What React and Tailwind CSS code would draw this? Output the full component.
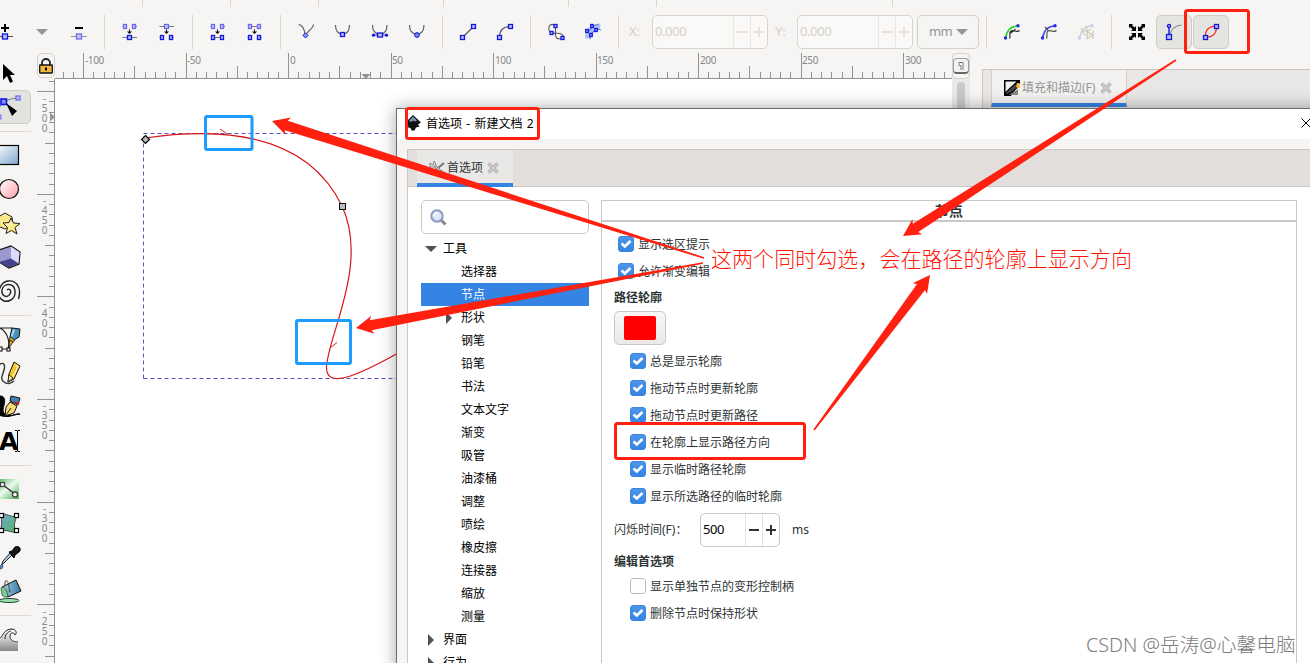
import React from "react";

const FONT = "font-['Noto_Sans','Noto_Sans_CJK_SC',sans-serif]";

/* ---------- toolbar icons (16x16 grid) ---------- */
const Node = ({ x, y, w = 3, h = 4, faded }) => (
  <rect x={x - w / 2} y={y - h / 2} width={w} height={h} fill={faded ? "#c9c9f5" : "#b4c4f0"} stroke={faded ? "#6a6aef" : "#1414e6"} strokeWidth="1.3" />
);
const L = ({ d, c = "#555", w = 1.1 }) => <path d={d} fill="none" stroke={c} strokeWidth={w} />;
const Down = () => <path d="M7 5.5h1v2h2l-2.500 2.600-2.500-2.600h2z" fill="#000" />;

const ICONS = {
  add: <><path d="M3 4h8M7 0v8" stroke="#000" strokeWidth="2" /><L d="M0 12.5h15" /><Node x={7} y={12.5} w={5} h={5} /></>,
  del: <><path d="M4 4h8" stroke="#000" strokeWidth="2" /><L d="M0 12.5h16" c="#999" /><Node x={8} y={12.5} w={5} h={5} faded /></>,
  join: <><L d="M.5 2.5h4M11 2.5h4M.5 13.5h14.500" c="#777" /><Node x={3} y={2.5} faded /><Node x={12} y={2.5} faded /><Down /><Node x={7.500} y={13.5} w={4} /></>,
  brk: <><L d="M.5 2.5h14.500M.5 13.5h4M11 13.5h4" c="#777" /><Node x={7.500} y={2.5} w={4} faded /><Down /><Node x={3} y={13.5} /><Node x={12} y={13.5} /></>,
  joinSeg: <><L d="M.5 2.5h4M11 2.5h4M1 13.5h13" c="#777" /><Node x={3} y={2.5} faded /><Node x={12} y={2.5} faded /><Down /><Node x={3} y={13.5} /><Node x={12} y={13.5} /></>,
  delSeg: <><L d="M1 2.5h13M.5 13.5h4M11 13.5h4" c="#777" /><Node x={3} y={2.5} faded /><Node x={12} y={2.5} faded /><Down /><Node x={3} y={13.5} /><Node x={12} y={13.5} /></>,
  cusp: <><L d="M.5.5C5 .5 6.500 6 7.500 11.500C8.500 8 15 5 15.500.5" /><path d="M7.500 8.800l2.600 2.600-2.600 2.600-2.600-2.600z" fill="#88a0e8" stroke="#1414e6" /></>,
  smooth: <><L d="M.500 1c0 6 3 9 7 9s7-3 7-9" /><Node x={7.500} y={10.500} w={4} /></>,
  sym: <><L d="M.500 1c0 6 3 9 7.500 9s7-3 7-9M2 11h12" /><circle cx="1.500" cy="11.200" r="1.600" fill="#1414e6" /><circle cx="14.500" cy="11.200" r="1.600" fill="#1414e6" /><Node x={8} y={11} w={5} /></>,
  auto: <><L d="M.500 1c0 6 3 9 7.500 9s7-3 7-9" /><circle cx="8" cy="11" r="2.400" fill="#7088e8" stroke="#1414e6" /></>,
  line: <><L d="M2.500 13.500L13.500 2.500" /><Node x={2.500} y={13.500} w={4} /><Node x={13.500} y={2.500} w={4} /></>,
  curve: <><L d="M2.500 13.500C2.500 6 6 2.500 13.500 2.500" /><Node x={2.500} y={13.500} w={4} /><Node x={13.500} y={2.500} w={4} /></>,
  obj: <><L d="M7 1C3-.5.5 1 .8 5c.4 4 4 4.500 7 4.300s7-.300 7.700 3.700M7.500 2v9c0 3 2 4.500 6 3.500" /><Node x={7.500} y={2} w={3} h={3} /><Node x={3.500} y={9} w={3} h={3} /><Node x={14.500} y={14} w={3} h={3} /></>,
  stroke: <><path d="M0 14C0 5 6-.5 15.500.5L15 6C10 6 7 8 5.500 15z" fill="#a9c2ee" /><L d="M0 7h4l4-5 6-2M5 15l1-5 5-5 5 1" c="#5a74e0" /><Node x={2} y={7} w={2.500} h={3} /><Node x={7} y={2} w={2.500} h={3} /><Node x={6} y={11} w={2.500} h={3} /><Node x={11} y={6} w={2.500} h={3} /></>,
  clip: <><path d="M1.500 14C3 6 8 2 14 2" fill="none" stroke="#22d322" strokeWidth="1.700" /><L d="M5.500 14.500C7 11 4.500 8.500 7 7s6 2 8.500-.5M6.500 9c2-2 4-2 5-4" c="#222" /><circle cx="1.500" cy="14" r="1.700" fill="#2828f0" /><circle cx="14" cy="1.800" r="1.700" fill="#2828f0" /></>,
  mask: <><path d="M1.500 14C3 6 8 2 14 2" fill="none" stroke="#4a4af0" strokeWidth="1.700" /><L d="M5.500 14.500C7 11 4.500 8.500 7 7s6 2 8.500-.5M4 3l3 3" c="#444" /><circle cx="1.500" cy="14" r="1.700" fill="#2828f0" /><circle cx="14" cy="1.800" r="1.700" fill="#2828f0" /></>,
  lpe: <g opacity=".35"><path d="M1.500 14C3 6 8 2 14 2M3 4l4 8M7 2l3 5M5 7l8-1" fill="none" stroke="#7f9a7f" strokeWidth="1.400" /><path d="M9 7v8l5.500-4zM15 7v8" fill="#f0e080" stroke="#555" /><circle cx="1.500" cy="14" r="1.700" fill="#8080f0" /><circle cx="14" cy="1.800" r="1.700" fill="#8080f0" /></g>,
  nodes: <g fill="#000" stroke="#000"><path d="M1 1l5 5M15 1l-5 5M1 15l5-5M15 15l-5-5" strokeWidth="2.600" /><path d="M7 2v5H2zM9 2v5h5zM7 14V9H2zM9 14V9h5z" stroke="none" /><path d="M0 0h4L0 4zM16 0h-4l4 4zM0 16h4l-4-4zM16 16h-4l4-4z" stroke="none" /></g>,
  handles: <><L d="M3 3v10" c="#1414e6" w={1.400} /><L d="M3.500 12C5 5 9 1.500 15.500 1" c="#888" /><circle cx="3" cy="2" r="1.600" fill="#aab" stroke="#1414e6" strokeWidth="1.300" /><Node x={3} y={13} w={5} h={5} /></>,
  outline: <><path d="M2.500 13C2 6 6 2 13 2.500C14.500 9 9 14 2.500 13z" fill="none" stroke="#ff1515" strokeWidth="1.200" /><Node x={2.500} y={13.500} w={4} h={4} /><Node x={13.500} y={2.500} w={4} h={4} /></>,
};

const Ico = ({ n, on }) => (
  <div className={on ? "ml-px w-[36px] h-[34px] shrink-0 flex items-center justify-center rounded-[5px] border border-[#cfcbc6] bg-[#e4e4e0]" : "w-[37px] h-[34px] shrink-0 flex items-center justify-center pl-px"}>
    <svg width="16" height="16" viewBox="0 0 16 16" className="overflow-visible">{ICONS[n]}</svg>
  </div>
);
const Sep = () => <div className="w-[14px] h-[34px] shrink-0 flex justify-center"><div className="w-px h-full bg-[#d9d6d2]" /></div>;

const Entry = () => (
  <div className="w-[116px] h-[34px] shrink-0 flex rounded-[5px] border border-[#d8d4cf] bg-[#faf9f8] text-[#d3cfca] text-[13px] overflow-hidden">
    <div className="flex-1 flex items-center pl-[2px] tracking-[-0.4px]">0.000</div>
    <div className="w-[17px] border-l border-[#e8e6e3] flex items-center justify-center"><div className="w-[11px] h-[2px] bg-[#e6e3df]" /></div>
    <div className="w-[17px] border-l border-[#e8e6e3] flex items-center justify-center">
      <svg width="10" height="10"><path d="M0 5h10M5 0v10" stroke="#e6e3df" strokeWidth="2" /></svg>
    </div>
  </div>
);

const TopStrip = () => (
  <div className="h-[7px] flex shrink-0">
    {[143, 88, 88, 125, 125, 88, 236].map((w, i) => (
      <div key={i} className="shrink-0 border-r border-[#d9d6d2] h-full" style={{ width: w }} />
    ))}
  </div>
);

const Toolbar = () => (
  <div className="mt-[8px] h-[34px] flex items-center shrink-0">
    <div className="w-[24px] shrink-0 flex justify-end"><Ico n="add" /></div>
    <div className="w-[36px] shrink-0 flex justify-center"><div className="border-x-[6px] border-x-transparent border-t-[6px] border-t-[#929595]" /></div>
    <Ico n="del" /><Sep />
    <Ico n="join" /><Ico n="brk" /><Sep />
    <Ico n="joinSeg" /><Ico n="delSeg" /><Sep />
    <Ico n="cusp" /><Ico n="smooth" /><Ico n="sym" /><Ico n="auto" /><Sep />
    <Ico n="line" /><Ico n="curve" /><Sep />
    <Ico n="obj" /><Ico n="stroke" /><Sep />
    <div className="w-[27px] shrink-0 pl-[4px] text-[13px] text-[#d3cfca]">X:</div>
    <Entry />
    <div className="w-[29px] shrink-0 pl-[7px] text-[13px] text-[#d3cfca]">Y:</div>
    <Entry />
    <div className="ml-1 w-[62px] h-[34px] shrink-0 flex items-center rounded-[5px] border border-[#d3cfca] text-[13px] text-[#929595] pl-[11px] gap-[4px]">
      <span className="tracking-[-0.6px]">mm</span><div className="border-x-[6px] border-x-transparent border-t-[6px] border-t-[#929595]" />
    </div>
    <Sep />
    <Ico n="clip" /><Ico n="mask" /><Ico n="lpe" /><Sep />
    <Ico n="nodes" /><Ico n="handles" on /><Ico n="outline" on />
  </div>
);

/* ---------- toolbox (24x24 grid) ---------- */
const TOOLS = {
  select: <path d="M6 3v16l4-4 3 7 3-1.500-3-6.500h5z" fill="#000" />,
  node: <><path d="M0 20C1 10 8 4 20 3" fill="none" stroke="#777" /><rect x="4" y="4" width="5.500" height="5.500" fill="#7c90f0" stroke="#1414e6" strokeWidth="1.600" /><rect x="19" y="1" width="4" height="4" fill="#c0c0f5" stroke="#6a6aef" strokeWidth="1.300" /><rect x="0" y="20" width="4" height="4" fill="#c0c0f5" stroke="#6a6aef" /><path d="M9 8l11 8-5 5z" fill="#000" /></>,
  rect: <rect x="-2" y="2.500" width="23.500" height="19" fill="url(#gRect)" stroke="#000" strokeWidth="1.200" />,
  circle: <circle cx="12" cy="12" r="9.500" fill="url(#gCirc)" stroke="#111" strokeWidth="1.200" />,
  star: <><path d="M1 6l7-4 7 4 1 8-8 4-7-3z" fill="#fae98c" stroke="#222" /><path d="M14 7l2.500 5 6.500.5-5 4 2 6.500-5.500-3.500-5.500 3 1.500-6L6 12l6-.5z" fill="url(#gStar)" stroke="#222" /></>,
  box: <><path d="M2 5l12-4 9 6-1 12-10 4-10-6z" fill="#9a9ad0" stroke="#111" strokeWidth="1.200" /><path d="M14 1.500l8.500 6-1 11-7.500-5z" fill="#dcdcfa" /><path d="M2.500 17l11.500-3.500 7.500 5-9.500 4z" fill="#44448f" /></>,
  spiral: <path d="M21.500 20C25 8 19 1 11 2S-1 15 4 20s15 1 14-8-12-8-13-1 6 8 8 4-1-6-3-4" fill="none" stroke="#222" strokeWidth="1.400" />,
  pen: <><path d="M0 1h15M3 1c8 4 10 14 8 21H0" fill="none" stroke="#222" strokeWidth="1.200" /><path d="M15 1l8 1-1 8-5 3-4-3z" fill="#4a91be" stroke="#111" /><path d="M16 2.500l2 .300-2.500 7-1.500-.5z" fill="#b8dcf0" /><path d="M13 10l4.500 3-1 2-4-2z" fill="#f0c040" stroke="#111" strokeWidth=".8" /><path d="M12.500 13l3.500 2-4 6z" fill="#eca822" stroke="#111" strokeWidth=".8" /><rect x="1" y="20" width="4" height="4" fill="#fff" stroke="#000" /><rect x="10" y="21" width="3" height="3" fill="#fff" stroke="#000" /></>,
  pencil: <><path d="M0 6c5-6 9-4 7 3S3 18 7 21s7 1 10-1" fill="none" stroke="#333" strokeWidth="1.400" /><path d="M17 1l6 4-6 13-6 3 1-8z" fill="#f8c32c" stroke="#111" /><path d="M18.500 4l2.500 1.500-5 10" fill="none" stroke="#fff0a0" strokeWidth="1.500" /><path d="M12 14l4 3-5 4z" fill="#fff3c0" stroke="#111" strokeWidth=".8" /></>,
  calli: <><path d="M0 2c6-3 9 1 7 8s-1 9 5 10 7-1 11-1c-5-1-8 3-13 2.500S-1 22 0 12z" fill="#000" stroke="#000" /><path d="M13 7l7 4-3 7-9 3 1-9z" fill="#f7d977" stroke="#111" /><path d="M14 1l9 2-2 7-8-4z" fill="#3f83b3" stroke="#111" /><path d="M18 7l4 2" stroke="#d32020" strokeWidth="2" /><path d="M9 20l5-7" stroke="#222" /></>,
  gradient: <><rect x="-2" y="2" width="24" height="20" fill="url(#gGrad)" /><path d="M6 8l12 9" stroke="#222" strokeWidth="1.200" /><rect x="3.500" y="5.500" width="4" height="4" fill="#fff" stroke="#444" strokeWidth="1.300" /><circle cx="18" cy="17.500" r="2.500" fill="#fff" stroke="#444" strokeWidth="1.300" /></>,
  mesh: <><path d="M4 4c5-3 9 3 16 1-2 5-4 9-1 16-5 1-9-3-16-1 2-5 2-9 1-16z" fill="url(#gMesh)" stroke="#444" />{[[2.500, 2.500], [17.500, 2.500], [2.500, 17.500], [17.500, 17.500]].map(([x, y]) => <rect key={x + "-" + y} x={x} y={y} width="4" height="4" fill="#fff" stroke="#000" strokeWidth="1.200" />)}</>,
  dropper: <><path d="M16 9L7 18l-2 1 1-3 8-9z" fill="#a9cdea" stroke="#222" /><path d="M12 7l3-1 3-4c4-2 7 2 4 5l-4 3-1 3z" fill="#151515" stroke="#000" /><path d="M5 19c2 3 0 5-1 5s-2-2 1-5z" fill="#5f97cf" stroke="#234" strokeWidth=".8" /></>,
  bucket: <><ellipse cx="12" cy="21.500" rx="10" ry="2" fill="#9ee0aa" stroke="#243" /><path d="M5 8l14-7 5 11-13 6-4-2z" fill="url(#gBucket)" stroke="#111" /><path d="M5 8c3 0 5 4 6 9-2 2-6 1-6-2s-2-5 0-7z" fill="#7fcf93" stroke="#243" strokeWidth=".8" /><path d="M8 7c-1-7 3-8 4 1s1 4 1 3" fill="none" stroke="#444" /></>,
  tweak: <><path d="M0 17C6 12 5 3 14 3c5 0 6 4 4 5-1-3-5-3-5 1 0 5 3 7 8 7v8H0z" fill="url(#gTweak)" /><path d="M0 13C6 12 5 3 14 2c6 0 6 5 4 6-1-3-5-3-5 1 0 4 3 6 8 6M8 12c0-4 2-7 6-8" fill="none" stroke="#222" /></>,
};
const Tool = ({ n, on }) => (
  <div className={on ? "h-[34px] w-[38px] shrink-0 flex items-center pl-[3px] rounded-[5px] border border-[#d0ccc7] bg-[#e2e3df]" : "h-[34px] w-[38px] shrink-0 flex items-center pl-1"}>
    {n === "text" ? (
      <div className="flex items-center pl-[2px] font-['DejaVu_Sans',sans-serif] text-[25px] leading-none font-bold text-black">A
        <svg width="5" height="22" className="-ml-[3px]"><path d="M0 .500h2l.500 1 .500-1h2M0 21.500h2l.500-1 .500 1h2M2.500 1v20" stroke="#000" fill="none" /></svg>
      </div>
    ) : (
      <svg width="24" height="24" viewBox="0 0 24 24" className="overflow-visible">{TOOLS[n]}</svg>
    )}
  </div>
);
const HSep = () => <div className="h-[14px] w-[38px] shrink-0 flex items-center"><div className="h-px w-full bg-[#dcd9d6]" /></div>;

const Toolbox = () => (
  <div className="w-[37px] shrink-0 overflow-hidden pt-[7px]">
    <svg width="0" height="0" className="absolute">
      <defs>
        <linearGradient id="gRect" x2="1" y2="1"><stop stopColor="#fff" /><stop offset="1" stopColor="#7ea6cc" /></linearGradient>
        <linearGradient id="gCirc" x2="1" y2="1"><stop stopColor="#fff" /><stop offset="1" stopColor="#ff9eac" /></linearGradient>
        <linearGradient id="gStar" x2="1" y2="1"><stop stopColor="#fffbd0" /><stop offset="1" stopColor="#f8dc50" /></linearGradient>
        <linearGradient id="gGrad" x2="1" y2="1"><stop stopColor="#3faf4c" /><stop offset=".5" stopColor="#eefaee" /><stop offset="1" stopColor="#3faf4c" /></linearGradient>
        <linearGradient id="gMesh" x2="1" y2="1"><stop stopColor="#7aa2d2" /><stop offset="1" stopColor="#4dbb62" /></linearGradient>
        <linearGradient id="gBucket" x2="1" y2="0"><stop stopColor="#a8d0e4" /><stop offset="1" stopColor="#3878a4" /></linearGradient>
        <linearGradient id="gTweak" x2="0" y2="1"><stop stopColor="#fff" /><stop offset="1" stopColor="#888" /></linearGradient>
      </defs>
    </svg>
    <div className="-ml-[7px] flex flex-col">
      <div className="-mt-[4px]" />
      <Tool n="select" /><Tool n="node" on /><HSep />
      {["rect", "circle", "star", "box", "spiral"].map((n) => <Tool key={n} n={n} />)}<HSep />
      {["pen", "pencil", "calli", "text"].map((n) => <Tool key={n} n={n} />)}<HSep />
      {["gradient", "mesh", "dropper", "bucket"].map((n) => <Tool key={n} n={n} />)}<HSep />
      <Tool n="tweak" />
    </div>
  </div>
);

/* ---------- rulers ---------- */
const HRuler = () => {
  const ticks = [];
  for (let k = -22; k <= 64; k++) ticks.push(k);
  return (
    <svg width="897" height="26" className="shrink-0">
      <g fill="#8f9496">
        {ticks.map((k) => {
          const x = Math.round(233 + k * 10.250);
          const h = k % 10 === 0 ? 26 : k % 5 === 0 ? 13 : 7;
          return <rect key={k} x={x} y={26 - h} width="1" height={h} />;
        })}
        <rect y="25" width="897" height="1" />
        <path d="M306.500 21h9l-4.500 5z" />
      </g>
      <g fill="#85898b" fontSize="10">
        {[-100, -50, 0, 50, 100, 150, 200, 250, 300].map((v) => (
          <text key={v} x={Math.round(234.800 + v * 2.050)} y="11" letterSpacing="-0.4">{v}</text>
        ))}
      </g>
    </svg>
  );
};
const VRuler = () => {
  const ticks = [];
  for (let k = -1; k <= 56; k++) ticks.push(k);
  return (
    <svg width="18" height="584" className="shrink-0">
      <g fill="#8f9496">
        {ticks.map((k) => {
          const y = Math.round(12.200 + k * 10.260);
          const w = k % 10 === 0 ? 18 : k % 5 === 0 ? 10 : 6;
          return <rect key={k} x={18 - w} y={y} width={w} height="1" />;
        })}
        <rect x="17" width="1" height="584" />
        <path d="M13 33.500v9l5-4.500z" />
      </g>
      <g fill="#85898b" fontSize="10" textAnchor="middle">
        {["-500", "-450", "-400", "-350", "-300", "-250"].map((s, i) =>
          s.split("").map((c, j) => <text key={i + "-" + j} x="7.500" y={22.500 + i * 102.600 + j * 10}>{c}</text>)
        )}
      </g>
    </svg>
  );
};

const Drawing = () => (
  <svg width="897" height="584" viewBox="55 79 897 584" className="block">
    <path d="M143.500 378.500V133.500H420M143.500 378.500H420" fill="none" stroke="#5a55c8" strokeDasharray="4 3" />
    <path d="M145 138C215 128 305 130 342 206C369 264 328 335 326.500 367C326 388 352 379 400 352" fill="none" stroke="#d81818" strokeWidth="1.200" />
    <path d="M220 129l8 5.500M330 348l7-5.500" stroke="#e02020" />
    <path d="M145.500 135.500l4 4-4 4-4-4z" fill="#bbb" stroke="#000" strokeWidth="1.200" />
    <rect x="339.500" y="203.500" width="6" height="6" fill="#bdbdbd" stroke="#111" />
    <rect x="205.500" y="116.500" width="46.500" height="33" rx="1.500" fill="none" stroke="#1e9bff" strokeWidth="3" />
    <rect x="296.500" y="320.500" width="54" height="43" rx="1.500" fill="none" stroke="#1e9bff" strokeWidth="3" />
  </svg>
);

const CloseMark = () => (
  <svg width="12" height="12" viewBox="0 0 12 12"><path d="M1.500 1.500l9 9M10.500 1.500l-9 9" stroke="#b4b2af" strokeWidth="3.200" /><path d="M2 2l8 8M10 2l-8 8" stroke="#d4d2d0" strokeWidth="1.200" /></svg>
);

const Dock = () => (
  <div className="flex-1 mt-[16px] ml-[12px] border-l border-t border-[#cdc7c2] bg-[#e9e7e5] pl-[8px]">
    <div className="w-[136px] h-[37px] flex items-center pt-[2px] pl-[12px] border-x border-[#d5d0cc] border-b-[4px] border-b-[#3584e4] bg-[#f2f1f0] text-[12px] text-[#929595]">
      <svg width="16" height="16" viewBox="0 0 16 16"><path d="M0 0h16v3L7 16H0z" fill="#000" /><path d="M1.500 1.500h11L1.500 12z" fill="#f2f2f2" /><path d="M2 12L11 4l3 3-7 6-6 2z" fill="#444" stroke="#000" /><path d="M13 3l2 0 1 4-2 2-2-3z" fill="#f4b530" /><path d="M5 15l9-6v6z" fill="#888" /></svg>
      <span className="ml-[2px] mr-[5px] whitespace-nowrap">填充和描边(F)</span><CloseMark />
    </div>
  </div>
);

/* ---------- preferences window ---------- */
const Check = ({ label, off }) => (
  <label className="h-[27px] flex items-center gap-[4px] text-[12px] text-[#2e3436] whitespace-nowrap">
    {off ? <span className="-mt-[2px] w-[16px] h-[16px] rounded-[3px] border border-[#c2bcb6] bg-white" /> : (
      <span className="-mt-[2px] w-[16px] h-[16px] rounded-[3px] border border-[#3a83dc] bg-linear-to-b from-[#4c95ea] to-[#3584e4] flex items-center justify-center">
        <svg width="12" height="10" viewBox="0 0 12 10"><path d="M1.500 4.500l3.300 3L10.500 2" fill="none" stroke="#fff" strokeWidth="2.600" /></svg>
      </span>
    )}
    {label}
  </label>
);

const CHILDREN = ["选择器", "节点", "形状", "钢笔", "铅笔", "书法", "文本文字", "渐变", "吸管", "油漆桶", "调整", "喷绘", "橡皮擦", "连接器", "缩放", "测量"];
const Right = () => <span className="border-y-[6px] border-y-transparent border-l-[6px] border-l-[#4f5355]" />;
const Row = ({ children }) => <div className="h-[23px] flex items-center text-[12px] text-black">{children}</div>;

const Tree = () => (
  <div className="w-[168px] shrink-0">
    <div className="h-[34px] rounded-[5px] border border-[#cdc7c2] bg-white flex items-center pl-[8px]">
      <svg width="17" height="17" viewBox="0 0 17 17"><path d="M10.500 10.500l5 5" stroke="#888" strokeWidth="3" /><circle cx="7" cy="7" r="5.700" fill="#dfe8f6" stroke="#8c97c2" strokeWidth="2" /><path d="M4 7a3 3 0 0 1 3-3" stroke="#fff" strokeWidth="1.500" fill="none" /></svg>
    </div>
    <div className="pt-[3px]">
      <Row><span className="ml-[4px] mr-[6px] border-x-[6px] border-x-transparent border-t-[6px] border-t-[#4f5355]" />工具</Row>
      {CHILDREN.map((c) => (
        <div key={c} className={c === "节点" ? "h-[23px] flex items-center text-[12px] bg-[#3584e4] text-white" : "h-[23px] flex items-center text-[12px] text-black"}>
          <span className="w-[40px] flex pl-[25px]">{c === "形状" && <Right />}</span>{c}
        </div>
      ))}
      {["界面", "行为"].map((c) => <Row key={c}><span className="w-[22px] flex pl-[7px]"><Right /></span>{c}</Row>)}
    </div>
  </div>
);

const Page = () => (
  <div className="ml-[12px] w-[696px] shrink-0 flex flex-col border border-b-0 border-[#cdc7c2] text-[#2e3436]">
    <div className="h-[21px] shrink-0 border-b-2 border-[#cdc7c2] flex items-center justify-center text-[14px] font-bold">节点</div>
    <div className="pl-[16px] pt-[9px]"><Check label="显示选区提示" /><Check label="允许渐变编辑" /></div>
    <div className="pl-[12px]">
      <div className="h-[26px] flex items-center text-[12px] font-bold pb-px">路径轮廓</div>
      <div className="w-[52px] h-[34px] rounded-[5px] border border-[#cdc7c2] bg-linear-to-b from-[#f8f7f6] to-[#ebe9e7] flex items-center justify-center"><div className="w-[32px] h-[24px] rounded-[2px] bg-[#ff0000]" /></div>
      <div className="pl-[16px] pt-[3px]">
        {["总是显示轮廓", "拖动节点时更新轮廓", "拖动节点时更新路径", "在轮廓上显示路径方向", "显示临时路径轮廓", "显示所选路径的临时轮廓"].map((t) => <Check key={t} label={t} />)}
      </div>
      <div className="mt-[3px] h-[34px] flex items-center text-[12px]">
        <span className="w-[86px] whitespace-nowrap">闪烁时间(F)：</span>
        <div className="w-[80px] h-[34px] rounded-[5px] border border-[#cdc7c2] flex text-[13px] text-black overflow-hidden">
          <span className="flex-1 flex items-center pl-[2px] tracking-[-0.4px]">500</span>
          <span className="w-[17px] border-l border-[#e4e1de] flex items-center justify-center"><span className="w-[10px] h-[2px] bg-[#2e3436]" /></span>
          <span className="w-[17px] border-l border-[#e4e1de] flex items-center justify-center"><svg width="10" height="10"><path d="M0 5h10M5 0v10" stroke="#2e3436" strokeWidth="2" /></svg></span>
        </div>
        <span className="ml-[12px] text-[12px]">ms</span>
      </div>
      <div className="mt-[3px] h-[24px] flex items-center text-[12px] font-bold">编辑首选项</div>
      <div className="pl-[16px] -mt-px"><Check label="显示单独节点的变形控制柄" off /><Check label="删除节点时保持形状" /></div>
    </div>
  </div>
);

const Preferences = () => (
  <div className="absolute left-[396px] top-[108px] w-[930px] h-[570px] border-l border-t border-[#6c6c6c] bg-[#f6f5f4] shadow-[0_0_16px_rgba(0,0,0,0.35)] flex flex-col">
    <div className="h-[30px] shrink-0 bg-white flex items-center pl-[8px] text-[12px] text-black">
      <svg width="16" height="16" viewBox="0 0 16 16" className="-mt-[2px]"><path d="M8 0l8 7.500-3 2 1.500 2-3.500 1-1.500 3h-3l-1-2.500L1.500 12l2-1.500L0 8z" fill="#111" /><path d="M8 1.500l4 4-2 1-2-1-2 1.500-2-1z" fill="#8193b5" /></svg>
      <span className="ml-[5px] flex-1 whitespace-nowrap [word-spacing:1.200px]">首选项 - 新建文档 2</span>
      <svg width="10" height="10" className="mr-[15px] -mt-[2px]"><path d="M.500.500l9 9M9.500.500l-9 9" stroke="#000" /></svg>
    </div>
    <div className="mt-[10px] ml-[10px] flex-1 border-l border-t border-[#cdc7c2] flex flex-col bg-white">
      <div className="h-[37px] shrink-0 bg-[#e1dedb] border-b border-[#cdc7c2] pl-[9px]">
        <div className="w-[96px] h-[37px] flex items-center pt-[2px] pl-[12px] border-b-[4px] border-[#3584e4] bg-[#eae8e6] text-[12px] text-[#2e3436]">
          <svg width="16" height="16" viewBox="0 0 16 16" fill="none"><path d="M2 14L15 3" stroke="#777" strokeWidth="2" /><path d="M4 4l9 9" stroke="#888" strokeWidth="3" /><path d="M4 4l9 9" stroke="#ddd" strokeWidth="1" /><path d="M1 3l3 2 1-4 2 3-2 3-4 0zM11 11l3 0 1 3-3 1z" fill="#ddd" stroke="#888" /></svg>
          <span className="ml-[2px] mr-[4px]">首选项</span><CloseMark />
        </div>
      </div>
      <div className="flex-1 pl-[13px] pt-[13px] flex"><Tree /><Page /></div>
    </div>
  </div>
);

/* ---------- annotations ---------- */
const Arrow = ({ from: [ax, ay], to: [bx, by] }) => {
  const len = Math.hypot(bx - ax, by - ay);
  const ux = (bx - ax) / len, uy = (by - ay) / len;
  const p = (back, side) => `${bx - ux * back - uy * side},${by - uy * back + ux * side}`;
  return <polygon fill="#ff2010" points={[p(0, 0), p(17, 9), p(15, 5), p(len, 0.800), p(len, -0.800), p(15, -5), p(17, -9)].join(" ")} />;
};
const Annotations = () => (
  <>
    <svg width="1310" height="663" className="absolute left-0 top-0 pointer-events-none">
      <g fill="none" stroke="#ff2010" strokeWidth="3">
        <rect x="406.500" y="108.500" width="132" height="30" rx="2" />
        <rect x="1185.500" y="10.500" width="63" height="42" rx="2" />
        <rect x="615.500" y="423.500" width="189" height="35" rx="2" />
      </g>
      <Arrow from={[704, 258]} to={[272, 121]} />
      <Arrow from={[703, 263]} to={[356, 328]} />
      <Arrow from={[1176, 60]} to={[903, 236]} />
      <Arrow from={[814, 430]} to={[930, 275]} />
    </svg>
    <div className="absolute left-[711px] top-[244px] text-[21.060px] leading-[30px] font-light text-[#ff1808] whitespace-nowrap">这两个同时勾选，会在路径的轮廓上显示方向</div>
    <div className="absolute left-[1086px] top-[632px] text-[19.700px] leading-[26px] font-light text-[#7c7c7c] whitespace-nowrap">CSDN @岳涛@心馨电脑</div>
  </>
);

export default function App() {
  return (
    <div className={`relative w-[1310px] h-[663px] overflow-hidden bg-[#f6f5f4] flex flex-col ${FONT}`}>
      <TopStrip />
      <Toolbar />
      <div className="mt-[4px] flex-1 flex min-h-0">
        <Toolbox />
        <div className="w-[915px] shrink-0 flex flex-col">
          <div className="flex h-[26px] shrink-0">
            <div className="w-[18px] h-[25px] shrink-0 rounded-[5px] border border-[#d3cfca] flex items-center justify-center">
              <svg width="14" height="16" viewBox="0 0 14 16"><path d="M3 8V5a4 4 0 0 1 8 0v3" fill="none" stroke="#222" strokeWidth="1.800" /><rect x=".7" y="7" width="12.600" height="8" rx=".5" fill="#f0b73a" stroke="#111" strokeWidth="1.300" /><path d="M7 9.500v3" stroke="#000" strokeWidth="2" /></svg>
            </div>
            <HRuler />
          </div>
          <div className="flex">
            <VRuler />
            <div className="bg-white"><Drawing /></div>
          </div>
        </div>
        <div className="w-[18px] shrink-0 flex flex-col bg-[#ebe9e7]">
          <div className="h-[26px] shrink-0 rounded-[5px] border border-[#d3cfca] bg-[#f6f5f4] flex items-center justify-center">
            <div className="w-[16px] h-[16px] shrink-0 rounded-[4px] border border-[#999] border-b-2 border-b-[#666] bg-[#f2f2f2] flex items-center justify-center"><svg width="6" height="8"><path d="M5 8V.500H1v3h2V8" fill="#fff" stroke="#777" /></svg></div>
          </div>
          <div className="mt-[3px] mx-auto w-[8px] h-[200px] rounded-full bg-[#cbc9c8]" />
        </div>
        <Dock />
      </div>
      <Preferences />
      <Annotations />
    </div>
  );
}
